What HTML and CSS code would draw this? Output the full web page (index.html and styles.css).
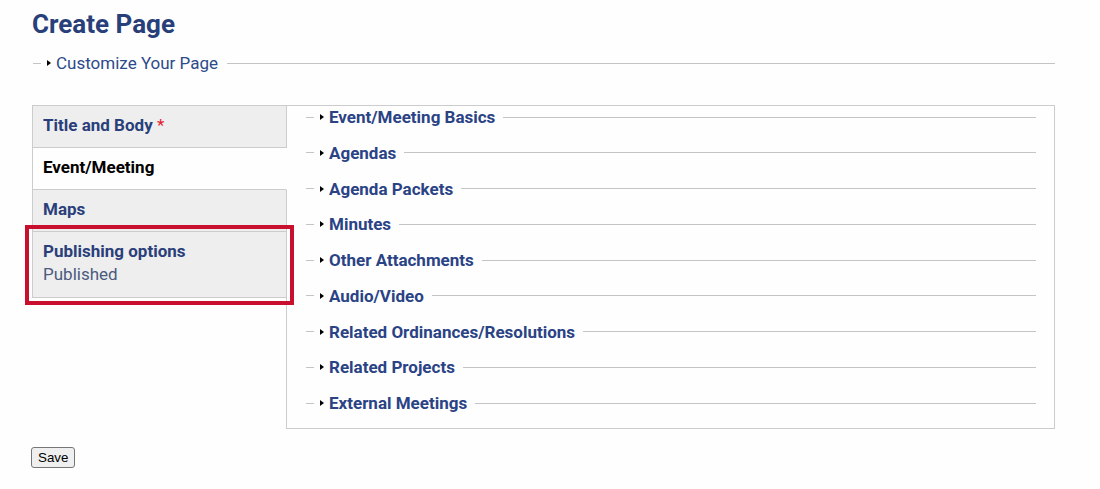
FILE: index.html
```html
<!DOCTYPE html>
<html lang="en">
<head>
<meta charset="utf-8">
<title>Create Page</title>
<link rel="stylesheet" href="styles.css">
</head>
<body>
<div class="page">
  <h1 class="title">Create Page</h1>
  <div class="legend-row">
    <span class="dash"></span>
    <span class="tri"></span>
    <span class="legend-text">Customize Your Page</span>
    <span class="rule"></span>
  </div>

  <div class="vt">
    <ul class="vt-menu">
      <li class="vt-tab first"><span class="vt-title">Title and Body</span> <span class="req">*</span></li>
      <li class="vt-tab selected"><span class="vt-title">Event/Meeting</span></li>
      <li class="vt-tab"><span class="vt-title">Maps</span></li>
      <li class="vt-tab highlighted"><span class="vt-title">Publishing options</span><span class="vt-summary">Published</span></li>
    </ul>
    <div class="vt-pane">
      <div class="det"><span class="dash"></span><span class="tri"></span><span class="det-text">Event/Meeting Basics</span><span class="rule"></span></div>
      <div class="det"><span class="dash"></span><span class="tri"></span><span class="det-text">Agendas</span><span class="rule"></span></div>
      <div class="det"><span class="dash"></span><span class="tri"></span><span class="det-text">Agenda Packets</span><span class="rule"></span></div>
      <div class="det"><span class="dash"></span><span class="tri"></span><span class="det-text">Minutes</span><span class="rule"></span></div>
      <div class="det"><span class="dash"></span><span class="tri"></span><span class="det-text">Other Attachments</span><span class="rule"></span></div>
      <div class="det"><span class="dash"></span><span class="tri"></span><span class="det-text">Audio/Video</span><span class="rule"></span></div>
      <div class="det"><span class="dash"></span><span class="tri"></span><span class="det-text">Related Ordinances/Resolutions</span><span class="rule"></span></div>
      <div class="det"><span class="dash"></span><span class="tri"></span><span class="det-text">Related Projects</span><span class="rule"></span></div>
      <div class="det"><span class="dash"></span><span class="tri"></span><span class="det-text">External Meetings</span><span class="rule"></span></div>
    </div>
  </div>

  <div class="actions">
    <button class="save" type="button">Save</button>
  </div>
</div>
</body>
</html>
```

FILE: styles.css
```css
html, body {
  margin: 0;
  padding: 0;
  background: #fefefe;
}
body {
  font-family: Roboto, "Liberation Sans", Arial, sans-serif;
  font-size: 17px;
  color: #2a3f7a;
}
.page {
  padding: 9px 45px 0 32px;
}
.title {
  margin: 0;
  font-size: 26px;
  line-height: 30px;
  font-weight: 700;
  color: #283f7a;
}
.legend-row {
  display: flex;
  align-items: center;
  height: 20px;
  margin-top: 14px;
  margin-left: 1px;
}
.dash {
  width: 8px;
  border-top: 1px solid #c4c4c4;
  margin-right: 6px;
  flex: none;
}
.tri {
  width: 0;
  height: 0;
  border-left: 4px solid #000;
  border-top: 3.5px solid transparent;
  border-bottom: 3.5px solid transparent;
  margin-right: 5px;
  flex: none;
}
.legend-text {
  line-height: 20px;
  color: #2d4a8a;
  margin-right: 9px;
}
.rule {
  flex: 1;
  border-top: 1px solid #c4c4c4;
}
.vt {
  display: flex;
  align-items: flex-start;
  margin-top: 32px;
}
.vt-menu {
  list-style: none;
  margin: 0 -1px 0 0;
  padding: 0;
  width: 255px;
  flex: none;
  position: relative;
  z-index: 1;
}
.vt-tab {
  background: #eeeeee;
  border: 1px solid #cccccc;
  border-top: none;
  padding: 9px 10px 11px;
  line-height: 21px;
}
.vt-tab.first {
  border-top: 1px solid #cccccc;
}
.vt-title {
  font-weight: 700;
  color: #2a3f7a;
}
.req {
  color: #e4202e;
}
.vt-tab.selected {
  background: #fefefe;
  border-right-color: #fefefe;
}
.vt-tab.selected .vt-title {
  color: #000;
}
.vt-tab.highlighted {
  padding-bottom: 12px;
  outline: 4px solid #c8102e;
  outline-offset: 3px;
}
.vt-summary {
  display: block;
  margin-top: 2px;
  color: #4b5a7f;
}
.vt-pane {
  flex: 1;
  border: 1px solid #cccccc;
  padding: 1px 18px 15px 19px;
  display: flex;
  flex-direction: column;
  gap: 15.75px;
  background: #fefefe;
}
.det {
  display: flex;
  align-items: center;
  height: 20px;
}
.det-text {
  font-weight: 700;
  line-height: 20px;
  color: #2a4385;
  margin-right: 8px;
  white-space: nowrap;
}
.actions {
  margin-top: 17px;
}
.save {
  font-family: "Liberation Sans", Arial, sans-serif;
  font-size: 13.33px;
  margin: 0 0 0 -1px;
  padding: 1px 6px;
  height: 21px;
  width: 44px;
  background: #efefef;
  border: 1px solid #767676;
  border-radius: 3px;
  color: #000;
}
```
